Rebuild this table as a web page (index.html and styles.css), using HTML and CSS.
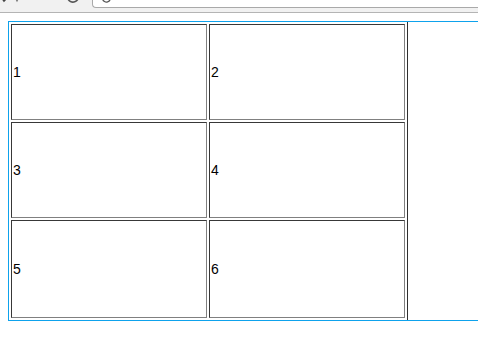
FILE: index.html
```html
<!DOCTYPE html>
<html>
<head>
<meta charset="utf-8">
<link rel="stylesheet" href="styles.css">
</head>
<body>
<div class="chrome">
  <svg class="nav-icons" width="92" height="12" viewBox="0 0 92 12">
    <path d="M1 -3 L4 1 L8 -3" fill="none" stroke="#444" stroke-width="1.5"/>
    <path d="M15 -3 L17 1 L19 -3" fill="none" stroke="#777" stroke-width="1.2"/>
    <path d="M68 -6 A5.5 5.5 0 0 0 78 -1" fill="none" stroke="#555" stroke-width="1.6"/>
  </svg>
  <div class="address">
    <svg class="addr-icon" width="10" height="4" viewBox="0 0 10 4">
      <path d="M1 -4 A4 4 0 0 0 8 0" fill="none" stroke="#555" stroke-width="1.4"/>
    </svg>
  </div>
</div>
<div class="page">
  <div class="frame">
    <table class="grid">
      <tr class="row">
        <td class="cell">1</td>
        <td class="cell">2</td>
      </tr>
      <tr class="row">
        <td class="cell">3</td>
        <td class="cell">4</td>
      </tr>
      <tr class="row row-last">
        <td class="cell">5</td>
        <td class="cell">6</td>
      </tr>
    </table>
  </div>
</div>
</body>
</html>
```
FILE: styles.css
```css
html, body {
  margin: 0;
  padding: 0;
  overflow: hidden;
  background: #ffffff;
}

body {
  font-family: "Liberation Sans", Arial, sans-serif;
  color: #000;
}

.chrome {
  height: 12px;
  background: #f1f1f1;
  border-bottom: 1px solid #b4b4b4;
  display: flex;
  align-items: flex-start;
  overflow: hidden;
}

.nav-icons {
  display: block;
  flex: none;
}

.address {
  flex: none;
  width: 420px;
  height: 7px;
  background: #ffffff;
  border-left: 1px solid #a9a9a9;
  border-bottom: 1px solid #a9a9a9;
  border-bottom-left-radius: 4px;
  display: flex;
  align-items: flex-start;
  padding-left: 9px;
}

.addr-icon {
  display: block;
}

.page {
  padding: 8px 0 0 8px;
}

.frame {
  border: 1px solid #0ea2ec;
  border-right: none;
}

.grid {
  border-collapse: separate;
  border-spacing: 2px;
  border-right: 1px solid #303030;
}

.cell {
  box-sizing: border-box;
  width: 196px;
  height: 96px;
  padding: 1px;
  border-style: solid;
  border-width: 1px;
  border-color: #383838 #808080 #808080 #383838;
  font-size: 14px;
  vertical-align: middle;
  text-align: left;
}

.row-last .cell {
  height: 98px;
}
```
